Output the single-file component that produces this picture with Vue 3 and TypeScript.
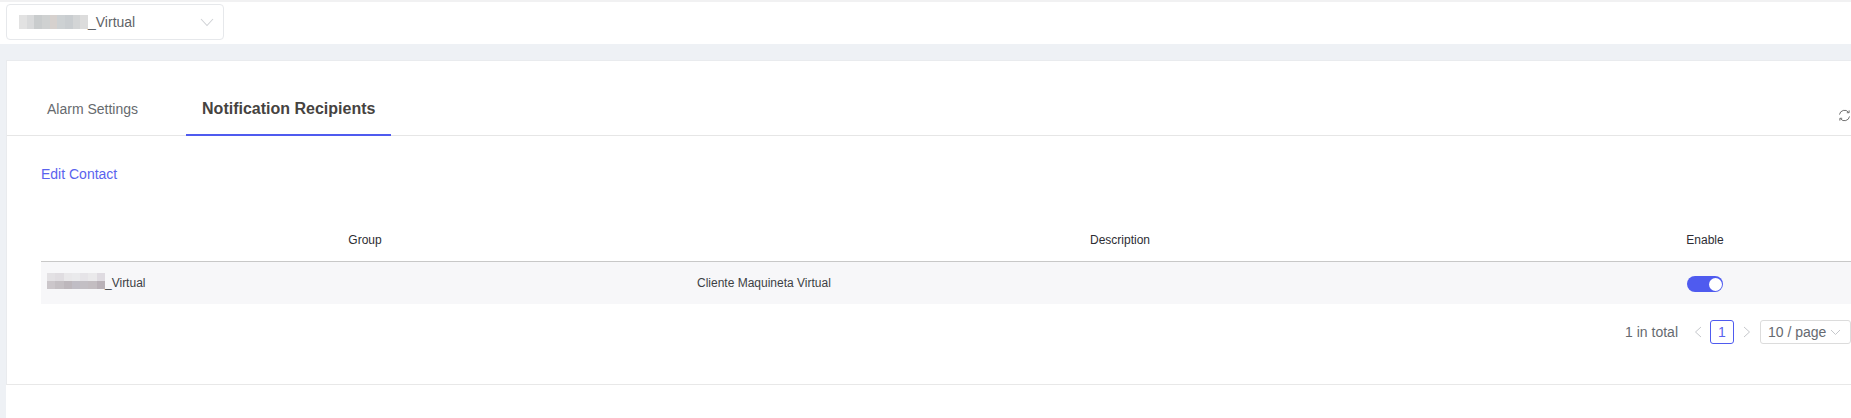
<script setup lang="ts">
const selectBlur = ['#e2e2e2', '#d9dadb', '#c9cccd', '#cfd1d1', '#d6d1ce', '#cdd1d3', '#c9cdd0', '#d3d5d6', '#dcdcdc']
const rowBlurTop = ['#e3e1e4', '#e0dde1', '#e9e8ea', '#eaeaec', '#e6e4e8', '#eae9eb', '#dfdbe1']
const rowBlurBottom = ['#cbc6ca', '#c4bfc3', '#bdb7bc', '#c0bdc5', '#c3bfc4', '#c3bdc1', '#b9b1b7']
</script>

<template>
  <div class="page">
    <div class="top-strip"></div>
    <header class="top-bar">
      <div class="select">
        <span class="select-value">
          <span class="blur blur-select">
            <i v-for="(c, i) in selectBlur" :key="i" :style="{ background: c }"></i>
          </span><span class="virtual">_Virtual</span>
        </span>
        <svg class="chevron" width="14" height="9" viewBox="0 0 14 9">
          <path d="M1 1l6 6.500L13 1" fill="none" stroke="#d0d2d6" stroke-width="1.1" />
        </svg>
      </div>
    </header>
    <main class="content">
      <section class="card">
        <div class="tabs">
          <div class="tab">Alarm Settings</div>
          <div class="tab active">Notification Recipients</div>
          <svg class="refresh" width="13" height="13" viewBox="0 0 14 14">
            <path d="M1.600 6A5.500 5.500 0 0 1 11.300 3.400M12.400 8A5.500 5.500 0 0 1 2.700 10.600" fill="none" stroke="#666" stroke-width="1" />
            <path d="M12 1.500v2.500H9.500M2 12.500v-2.500h2.500" fill="none" stroke="#666" stroke-width="1" />
          </svg>
        </div>
        <div class="body">
          <a class="edit">Edit Contact</a>
          <div class="table">
            <div class="thead">
              <div class="th">Group</div>
              <div class="th">Description</div>
              <div class="th">Enable</div>
            </div>
            <div class="trow">
              <div class="td">
                <span class="blur blur-row">
                  <span class="blur-line"><i v-for="(c, i) in rowBlurTop" :key="i" :style="{ background: c }"></i></span>
                  <span class="blur-line"><i v-for="(c, i) in rowBlurBottom" :key="i" :style="{ background: c }"></i></span>
                </span><span>_Virtual</span>
              </div>
              <div class="td desc">Cliente Maquineta Virtual</div>
              <div class="td center"><span class="switch"><span class="knob"></span></span></div>
            </div>
          </div>
          <div class="pager">
            <span class="total">1 in total</span>
            <svg class="arrow" width="8" height="12" viewBox="0 0 8 12"><path d="M7 1L1.500 6 7 11" fill="none" stroke="#c6c8cc" stroke-width="1" /></svg>
            <span class="page-num">1</span>
            <svg class="arrow" width="8" height="12" viewBox="0 0 8 12"><path d="M1 1l5.500 5L1 11" fill="none" stroke="#c6c8cc" stroke-width="1" /></svg>
            <div class="size">
              <span>10 / page</span>
              <svg width="11" height="7" viewBox="0 0 11 7"><path d="M1 1l4.500 4.500L10 1" fill="none" stroke="#c6c8cc" stroke-width="1" /></svg>
            </div>
          </div>
        </div>
      </section>
    </main>
  </div>
</template>

<style>
html, body { margin: 0; background: #fff; }
</style>

<style scoped>
.page {
  width: 1851px;
  height: 418px;
  overflow: hidden;
  font-family: "Liberation Sans", Arial, sans-serif;
  background: #fff;
  display: flex;
  flex-direction: column;
}
.top-strip {
  height: 2px;
  flex: none;
  background: #f1f1f2;
}
.top-bar {
  height: 42px;
  flex: none;
  box-sizing: border-box;
  padding: 2px 0 0 6px;
  background: #fff;
}
.select {
  width: 218px;
  height: 36px;
  box-sizing: border-box;
  border: 1px solid #e6e8eb;
  border-radius: 4px;
  display: flex;
  align-items: center;
  justify-content: space-between;
  padding: 0 9px 0 12px;
}
.select-value {
  display: flex;
  align-items: center;
  font-size: 14px;
  color: #5f6368;
}
.blur { display: inline-flex; flex: none; }
.blur i { display: block; }
.blur-select { width: 69px; height: 14px; }
.blur-select i { flex: 1; height: 14px; }
.content {
  flex: 1;
  background: #eef1f5;
  padding: 16px 0 0 6px;
  display: flex;
  flex-direction: column;
}
.card {
  width: 1900px;
  height: 325px;
  flex: none;
  box-sizing: border-box;
  background: #fff;
  border-top: 1px solid #e9ebee;
  border-left: 1px solid #e9ebee;
  border-bottom: 1px solid #e8e8e8;
}
.content::after {
  content: "";
  flex: 1;
  background: #fff;
}
.tabs {
  height: 75px;
  box-sizing: border-box;
  border-bottom: 1px solid #e6e6e6;
  display: flex;
  align-items: flex-end;
  padding-left: 19px;
  position: relative;
}
.tab {
  height: 74px;
  box-sizing: border-box;
  padding: 21px 21px 0;
  display: flex;
  align-items: center;
  font-size: 14px;
  color: #666a6e;
}
.tab.active {
  margin-left: 27px;
  padding: 23px 16px 0;
  font-size: 16px;
  font-weight: 700;
  color: #46433f;
  border-bottom: 2px solid #4f5bef;
  margin-bottom: -1px;
  height: 75px;
}
.refresh {
  position: absolute;
  left: 1831px;
  top: 48px;
}
.body {
  padding: 0 0 0 34px;
}
.edit {
  display: block;
  margin-top: 30px;
  height: 17px;
  line-height: 17px;
  font-size: 14px;
  color: #5a63ee;
}
.table {
  margin-top: 28px;
  width: 1818px;
  font-size: 12px;
  color: #3c3f44;
}
.thead, .trow {
  display: grid;
  grid-template-columns: 648px 862px 308px;
}
.thead {
  height: 51px;
  box-sizing: border-box;
  border-bottom: 1px solid #c8c8c8;
  color: #2d2d33;
}
.th {
  text-align: center;
  line-height: 46px;
  padding-top: 6px;
}
.trow {
  height: 42px;
  background: #f7f7f9;
  align-items: center;
}
.td {
  padding-left: 6px;
  display: flex;
  align-items: center;
}
.td.desc { padding-left: 8px; }
.td.center {
  justify-content: center;
  padding-left: 0;
}
.blur-row {
  flex-direction: column;
  width: 58px;
  height: 16px;
  margin-bottom: 4px;
}
.blur-line { display: flex; height: 8px; }
.blur-line i { flex: 1; height: 8px; }
.switch {
  width: 36px;
  height: 16px;
  margin-top: 2px;
  border-radius: 8px;
  background: #4f5bef;
  display: flex;
  justify-content: flex-end;
  align-items: center;
  padding-right: 1px;
  box-sizing: border-box;
}
.knob {
  width: 13px;
  height: 13px;
  border-radius: 50%;
  background: #fff;
}
.pager {
  margin-top: 16px;
  width: 1810px;
  height: 24px;
  display: flex;
  align-items: center;
  justify-content: flex-end;
  font-size: 14px;
  color: #666a70;
}
.total { margin-right: 16px; }
.arrow { flex: none; }
.page-num {
  width: 24px;
  height: 24px;
  box-sizing: border-box;
  border: 1px solid #4f5bef;
  border-radius: 3px;
  color: #5a63ee;
  display: flex;
  align-items: center;
  justify-content: center;
  margin: 0 9px 0 8px;
}
.size {
  margin-left: 9px;
  width: 91px;
  height: 24px;
  box-sizing: border-box;
  border: 1px solid #dcdcdc;
  border-radius: 3px;
  display: flex;
  align-items: center;
  gap: 4px;
  padding-left: 7px;
}
</style>
